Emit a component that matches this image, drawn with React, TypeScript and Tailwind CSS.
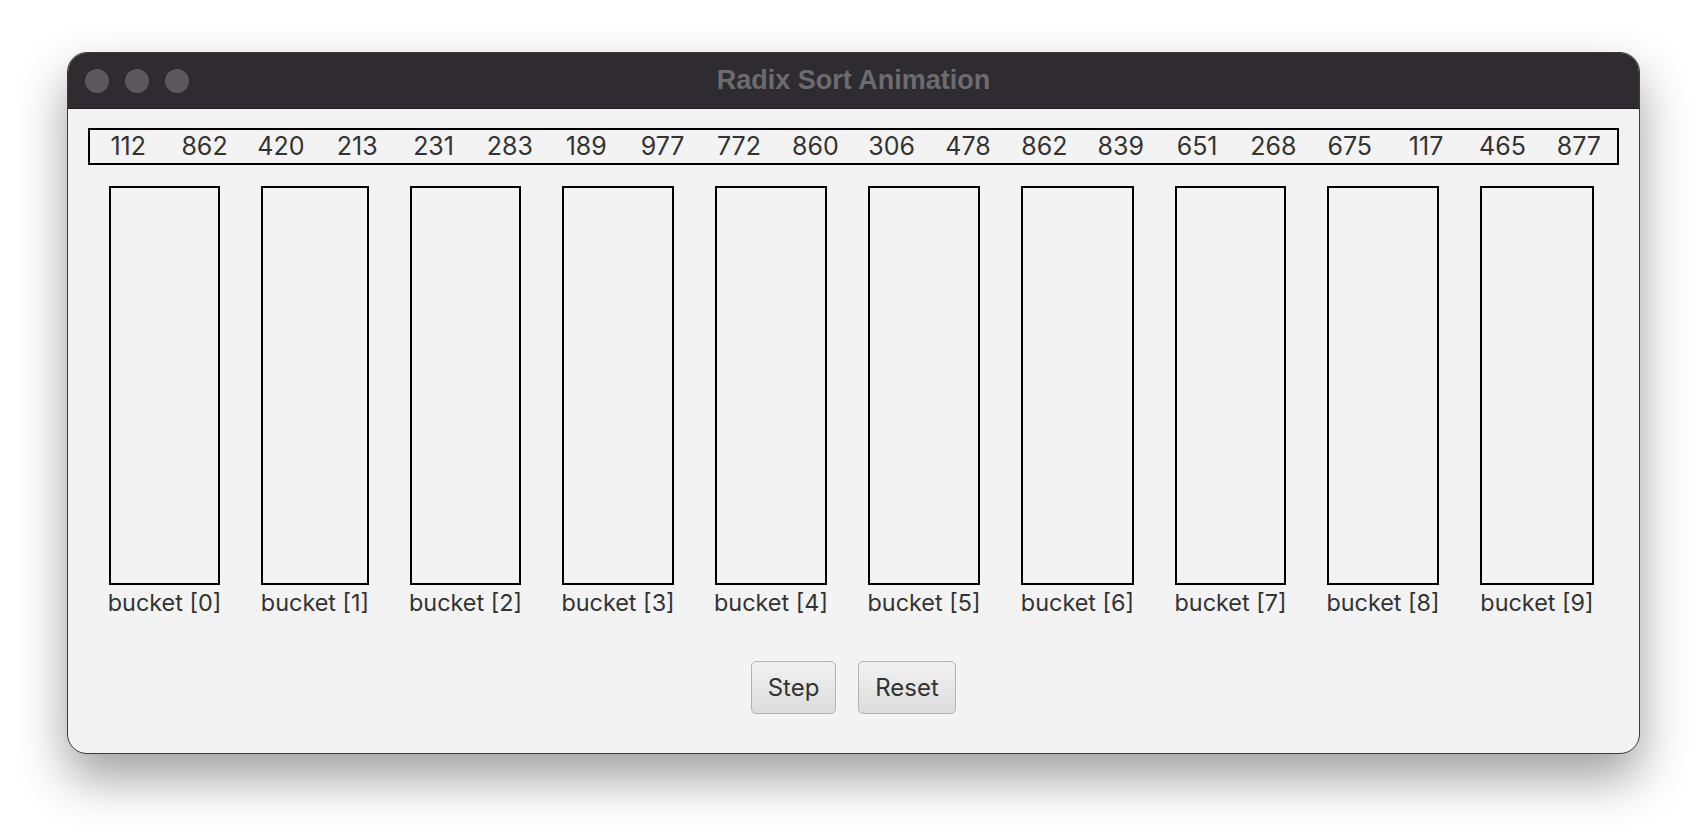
import React from "react";

const nums = [112, 862, 420, 213, 231, 283, 189, 977, 772, 860, 306, 478, 862, 839, 651, 268, 675, 117, 465, 877];
const bucketWidths = [111, 108, 111, 112, 112, 112, 113, 111, 112, 114];

export default function App() {
  return (
    <div className="w-[1708px] h-[838px] bg-white overflow-hidden pl-[67px] pt-[52px]" style={{ fontFamily: "Inter, 'Noto Sans', sans-serif" }}>
      <div className="w-[1573px] h-[702px] rounded-[20px] border border-[#3a3a3c] bg-[#f3f3f3] overflow-hidden flex flex-col shadow-[0_24px_50px_rgba(0,0,0,0.38)]">
        <div className="h-[56px] shrink-0 bg-[#2e2c31] border-b border-[#1e1d20] relative flex items-center justify-center">
          <div className="absolute left-[17px] top-[16px] flex gap-4">
            <div className="w-6 h-6 rounded-full bg-[#5a585d]" />
            <div className="w-6 h-6 rounded-full bg-[#5a585d]" />
            <div className="w-6 h-6 rounded-full bg-[#5a585d]" />
          </div>
          <span className="text-[27px] font-bold text-[#6c6b70]" style={{ fontFamily: "'Liberation Sans', Arial, sans-serif" }}>Radix Sort Animation</span>
        </div>
        <div className="flex flex-col px-[20px] pt-[19px]">
          <div className="h-[37px] border-2 border-black grid grid-cols-20 items-center">
            {nums.map((n, i) => (
              <span key={i} className="text-center text-[25px] leading-none text-[#333]">{n}</span>
            ))}
          </div>
          <div className="flex justify-center gap-[41px] mt-[21px] mr-[4px]">
            {bucketWidths.map((w, i) => (
              <div key={i} className="flex flex-col items-center" style={{ width: w }}>
                <div className="w-full h-[399px] border-2 border-black" />
                <span className="mt-[3px] text-[23.4px] leading-[30px] text-[#333] whitespace-nowrap">bucket [{i}]</span>
              </div>
            ))}
          </div>
          <div className="flex justify-center gap-[22px] mt-[43px]">
            <button className="w-[85px] h-[53px] rounded-[5px] border border-[#b3b3b3] bg-gradient-to-b from-[#f1f1f1] to-[#dddddd] text-[24px] text-[#333]">Step</button>
            <button className="w-[98px] h-[53px] rounded-[5px] border border-[#b3b3b3] bg-gradient-to-b from-[#f1f1f1] to-[#dddddd] text-[24px] text-[#333]">Reset</button>
          </div>
        </div>
      </div>
    </div>
  );
}
